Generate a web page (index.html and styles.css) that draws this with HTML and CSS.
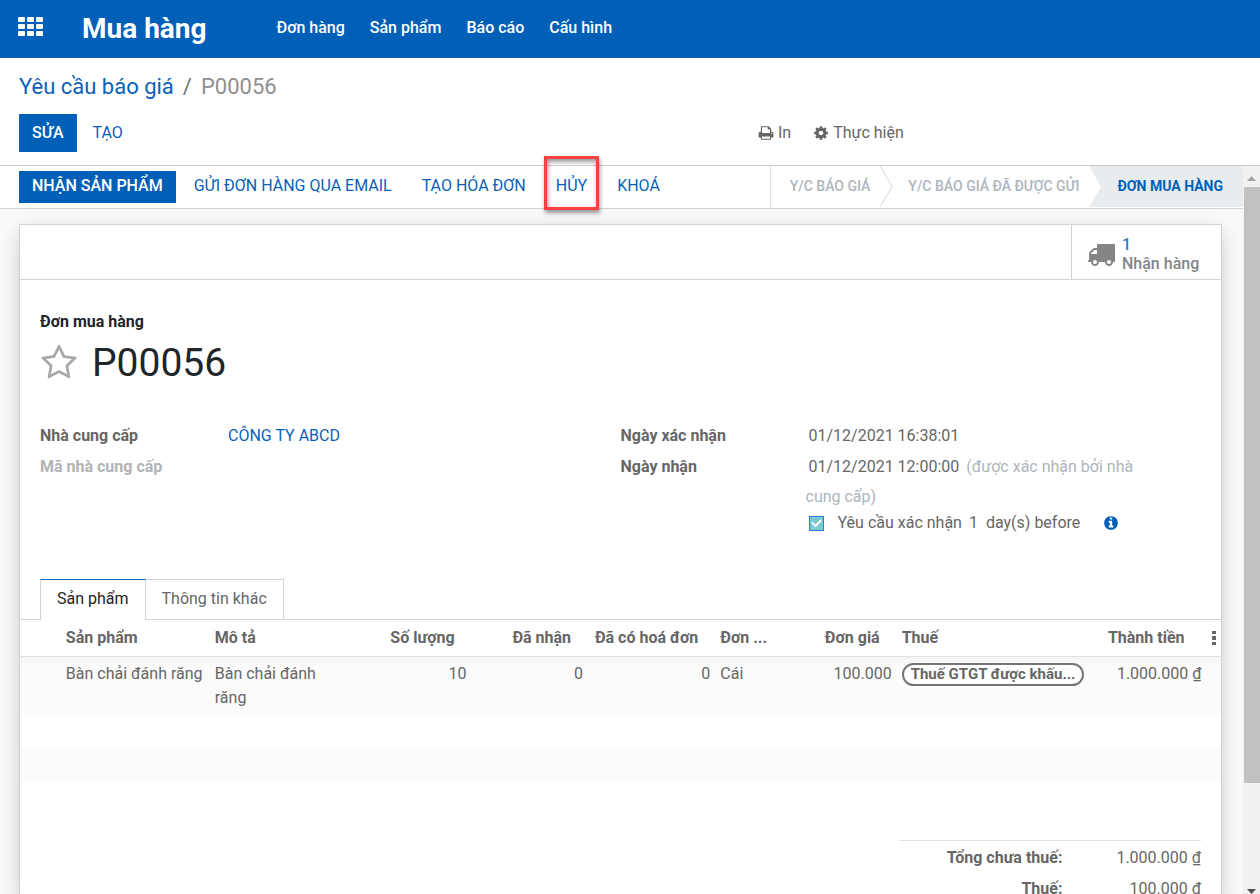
FILE: index.html
```html
<!DOCTYPE html>
<html lang="vi">
<head>
<meta charset="utf-8">
<meta name="viewport" content="width=device-width, initial-scale=1">
<title>P00056 - Mua hàng</title>
<link rel="stylesheet" href="styles.css">
</head>
<body class="app">
<header class="navbar">
  <button class="apps" type="button" aria-label="Menu">
    <svg class="apps-icon" viewBox="0 0 25 19" aria-hidden="true">
      <g fill="currentColor">
        <rect x="0" y="0" width="7" height="5" rx="1"/><rect x="9" y="0" width="7" height="5" rx="1"/><rect x="18" y="0" width="7" height="5" rx="1"/>
        <rect x="0" y="7" width="7" height="5" rx="1"/><rect x="9" y="7" width="7" height="5" rx="1"/><rect x="18" y="7" width="7" height="5" rx="1"/>
        <rect x="0" y="14" width="7" height="5" rx="1"/><rect x="9" y="14" width="7" height="5" rx="1"/><rect x="18" y="14" width="7" height="5" rx="1"/>
      </g>
    </svg>
  </button>
  <a class="brand" href="#">Mua hàng</a>
  <nav class="menu">
    <a href="#">Đơn hàng</a>
    <a href="#">Sản phẩm</a>
    <a href="#">Báo cáo</a>
    <a href="#">Cấu hình</a>
  </nav>
</header>

<section class="control-panel">
  <div class="breadcrumb"><a href="#">Yêu cầu báo giá</a><span class="slash">/</span><span class="current">P00056</span></div>
  <div class="cp-row">
    <div class="cp-buttons">
      <button class="btn btn-primary btn-tall" type="button">SỬA</button>
      <button class="btn btn-link btn-tall" type="button">TẠO</button>
    </div>
    <div class="cp-actions">
      <button class="action" type="button">
        <svg class="fa" viewBox="0 0 1792 1792" aria-hidden="true"><path d="M448 1536h896v-256h-896v256zm0-640h896v-384h-160q-40 0-68-28t-28-68v-160h-640v640zm1152 64q0-26-19-45t-45-19-45 19-19 45 19 45 45 19 45-19 19-45zm128 0v416q0 13-9.500 22.500t-22.500 9.500h-224v160q0 40-28 68t-68 28h-960q-40 0-68-28t-28-68v-160h-224q-13 0-22.500-9.500t-9.500-22.500v-416q0-79 56.500-135.500t135.500-56.500h64v-544q0-40 28-68t68-28h672q40 0 88 20t76 48l152 152q28 28 48 76t20 88v256h64q79 0 135.500 56.500t56.500 135.500z"/></svg>
        In
      </button>
      <button class="action" type="button">
        <svg class="fa" viewBox="0 0 1792 1792" aria-hidden="true"><path d="M1152 896q0-106-75-181t-181-75-181 75-75 181 75 181 181 75 181-75 75-181zm512-109v222q0 12-8 23t-20 13l-185 28q-19 54-39 91 35 50 107 138 10 12 10 25t-9 23q-27 37-99 108t-94 71q-12 0-26-9l-138-108q-44 23-91 38-16 136-29 186-7 28-36 28h-222q-14 0-24.500-8.500t-11.500-21.500l-28-184q-49-16-90-37l-141 107q-10 9-25 9-14 0-25-11-126-114-165-168-7-10-7-23 0-12 8-23 15-21 51-66.500t54-70.500q-27-50-41-99l-183-27q-13-2-21-12.500t-8-23.500v-222q0-12 8-23t19-13l186-28q14-46 39-92-40-57-107-138-10-12-10-24 0-10 9-23 26-36 98.500-107.500t94.500-71.500q13 0 26 10l138 107q44-23 91-38 16-136 29-186 7-28 36-28h222q14 0 24.500 8.500t11.500 21.500l28 184q49 16 90 37l142-107q9-9 24-9 13 0 25 10 129 119 165 170 7 8 7 22 0 12-8 23-15 21-51 66.500t-54 70.500q26 50 41 98l183 28q13 2 21 12.500t8 23.500z"/></svg>
        Thực hiện
      </button>
    </div>
  </div>
</section>

<div class="viewport">
  <main class="form-view">
    <div class="statusbar">
      <div class="status-buttons">
        <button class="btn btn-primary" type="button">NHẬN SẢN PHẨM</button>
        <button class="btn btn-link" type="button">GỬI ĐƠN HÀNG QUA EMAIL</button>
        <button class="btn btn-link" type="button">TẠO HÓA ĐƠN</button>
        <button class="btn btn-link marked" type="button">HỦY</button>
        <button class="btn btn-link" type="button">KHOÁ</button>
      </div>
      <div class="stages">
        <span class="stage">Y/C BÁO GIÁ</span>
        <svg class="chevron" viewBox="0 0 13 41" preserveAspectRatio="none" aria-hidden="true"><path d="M0 0L12 20.500L0 41" fill="none" stroke="#d4d8dd"/></svg>
        <span class="stage">Y/C BÁO GIÁ ĐÃ ĐƯỢC GỬI</span>
        <svg class="chevron" viewBox="0 0 13 41" preserveAspectRatio="none" aria-hidden="true"><path d="M0 0L12 20.500L0 41H13V0Z" fill="#e9ecef"/></svg>
        <span class="stage active">ĐƠN MUA HÀNG</span>
      </div>
    </div>

    <article class="sheet">
      <div class="button-box">
        <button class="stat" type="button">
          <svg class="fa truck" viewBox="0 0 1792 1792" aria-hidden="true"><path d="M640 1408q0-52-38-90t-90-38-90 38-38 90 38 90 90 38 90-38 38-90zm-384-512h384v-256h-158q-13 0-22 9l-195 195q-9 9-9 22v30zm1280 512q0-52-38-90t-90-38-90 38-38 90 38 90 90 38 90-38 38-90zm256-1088v1024q0 15-4 26.500t-13.500 18.500-16.500 11.500-23.500 6-22.500 2-25.500 0-22.500-.5q0 106-75 181t-181 75-181-75-75-181h-384q0 106-75 181t-181 75-181-75-75-181h-64q-3 0-22.500.5t-25.500 0-22.500-2-23.500-6-16.500-11.500-13.500-18.500-4-26.500q0-26 19-45t45-19v-320q0-8-.5-35t0-38 2.500-34.500 6.500-37 14-30.500 22.500-30l198-198q19-19 50.500-32t58.500-13h160v-192q0-26 19-45t45-19h1024q26 0 45 19t19 45z"/></svg>
          <span class="stat-info"><span class="stat-value">1</span><span>Nhận hàng</span></span>
        </button>
      </div>

      <div class="title">
        <span class="title-label">Đơn mua hàng</span>
        <h1 class="title-name">
          <button class="star" type="button" aria-label="Ưu tiên"><svg class="fa star-icon" viewBox="0 0 1792 1792" aria-hidden="true"><path d="M1201 1004l306-297-422-62-189-382-189 382-422 62 306 297-73 421 378-199 377 199zm527-357q0 22-26 48l-363 354 86 500q1 7 1 20 0 50-41 50-19 0-40-12l-449-236-449 236q-22 12-40 12-21 0-31.500-14.500t-10.500-35.500q0-6 2-20l86-500-364-354q-25-27-25-48 0-37 56-46l502-73 225-455q19-41 49-41t49 41l225 455 502 73q56 9 56 46z"/></svg></button>
          <span>P00056</span>
        </h1>
      </div>

      <div class="groups">
        <dl class="group">
          <dt>Nhà cung cấp</dt><dd><a class="value" href="#">CÔNG TY ABCD</a></dd>
          <dt class="empty">Mã nhà cung cấp</dt><dd></dd>
        </dl>
        <dl class="group">
          <dt>Ngày xác nhận</dt><dd><span class="value">01/12/2021 16:38:01</span></dd>
          <dt>Ngày nhận</dt>
          <dd class="receipt">
            <span class="value">01/12/2021 12:00:00</span> <span class="muted">(được xác nhận bởi nhà cung cấp)</span>
            <div class="reminder">
              <input class="check" type="checkbox" id="remind" checked>
              <label for="remind">Yêu cầu xác nhận</label>
              <span class="days">1</span>
              <span>day(s) before</span>
              <svg class="fa info" viewBox="0 0 1792 1792" aria-hidden="true"><path d="M1152 1376v-160q0-14-9-23t-23-9h-96v-512q0-14-9-23t-23-9h-320q-14 0-23 9t-9 23v160q0 14 9 23t23 9h96v320h-96q-14 0-23 9t-9 23v160q0 14 9 23t23 9h448q14 0 23-9t9-23zm-128-896v-160q0-14-9-23t-23-9h-192q-14 0-23 9t-9 23v160q0 14 9 23t23 9h192q14 0 23-9t9-23zm640 416q0 209-103 385.500t-279.500 279.500-385.500 103-385.500-103-279.500-279.500-103-385.500 103-385.500 279.500-279.500 385.500-103 385.500 103 279.500 279.500 103 385.500z"/></svg>
            </div>
          </dd>
        </dl>
      </div>

      <div class="tabs" role="tablist">
        <button class="tab selected" type="button" role="tab" aria-selected="true">Sản phẩm</button>
        <button class="tab" type="button" role="tab" aria-selected="false">Thông tin khác</button>
      </div>

      <table class="lines">
        <colgroup>
          <col class="c-handle"><col class="c-product"><col class="c-desc"><col class="c-qty"><col class="c-received"><col class="c-billed"><col class="c-uom"><col class="c-price"><col class="c-tax"><col class="c-total"><col class="c-more">
        </colgroup>
        <thead>
          <tr>
            <th></th><th>Sản phẩm</th><th>Mô tả</th><th class="num">Số lượng</th><th class="num">Đã nhận</th><th class="num">Đã có hoá đơn</th><th>Đơn ...</th><th class="num">Đơn giá</th><th>Thuế</th><th class="num subtotal">Thành tiền</th>
            <th class="more"><svg class="dots" viewBox="0 0 4 14" aria-hidden="true"><path d="M0 0h4v3H0zM0 5h4v4H0zM0 11h4v3H0z" fill="currentColor"/></svg></th>
          </tr>
        </thead>
        <tbody>
          <tr>
            <td></td><td>Bàn chải đánh răng</td><td>Bàn chải đánh răng</td><td class="num">10</td><td class="num">0</td><td class="num">0</td><td>Cái</td><td class="num">100.000</td><td><span class="tag">Thuế GTGT được khấu...</span></td><td class="num">1.000.000 ₫</td><td></td>
          </tr>
          <tr class="blank"><td colspan="11"></td></tr>
          <tr class="blank"><td colspan="11"></td></tr>
          <tr class="blank"><td colspan="11"></td></tr>
        </tbody>
      </table>

      <dl class="totals">
        <dt>Tổng chưa thuế:</dt><dd>1.000.000 ₫</dd>
        <dt>Thuế:</dt><dd>100.000 ₫</dd>
      </dl>
    </article>
  </main>
  <div class="scrollbar" aria-hidden="true">
    <svg class="arrow" viewBox="0 0 9 5"><path d="M0 5L4.500 0L9 5Z" fill="#a3a3a3"/></svg>
    <div class="thumb"></div>
    <svg class="arrow" viewBox="0 0 9 5"><path d="M0 0L4.500 5L9 0Z" fill="#505050"/></svg>
  </div>
</div>
</body>
</html>
```
FILE: styles.css
```css
* {
  box-sizing: border-box;
}

.app {
  margin: 0;
  height: 100vh;
  overflow: hidden;
  display: flex;
  flex-direction: column;
  background: #fff;
  color: #666;
  font: 16px/24px Roboto, "Noto Sans", sans-serif;
}

a {
  color: #0a5fb8;
  text-decoration: none;
}

button {
  font: inherit;
  color: inherit;
  background: none;
  border: 0;
  padding: 0;
}

dl,
dd,
h1 {
  margin: 0;
}

.fa {
  width: 16px;
  height: 16px;
  fill: currentColor;
  flex: none;
}

/* Top bar */
.navbar {
  flex: none;
  height: 58px;
  display: flex;
  align-items: center;
  padding: 0 18px 3px;
  background: #0060b7;
  color: #fff;
}

.navbar a {
  color: #fff;
}

.apps {
  display: flex;
  margin-right: 39px;
  padding-bottom: 2px;
}

.apps-icon {
  width: 25px;
  height: 19px;
}

.brand {
  font-size: 28px;
  font-weight: 700;
  margin-right: 70px;
  padding-top: 2px;
}

.menu {
  display: flex;
  gap: 25px;
  font-weight: 500;
}

/* Control panel */
.control-panel {
  flex: none;
  padding: 15px 19px 13px;
  border-bottom: 1px solid #c9ccd2;
}

.breadcrumb {
  display: flex;
  gap: 9px;
  font-size: 22px;
  line-height: 28px;
  margin-bottom: 13px;
}

.slash {
  color: #6c757d;
}

.current {
  color: #8f8f8f;
}

.cp-row {
  display: grid;
  grid-template-columns: 739px 1fr;
  align-items: center;
}

.cp-buttons {
  display: flex;
  gap: 4px;
}

.cp-actions {
  display: flex;
  gap: 22px;
}

.action {
  display: flex;
  align-items: center;
  gap: 4px;
}

.btn {
  padding: 0 12px 2px;
  height: 32px;
  line-height: 30px;
  white-space: nowrap;
}

.btn-primary {
  padding-left: 13px;
  padding-right: 13px;
  background: #0060b7;
  color: #fff;
  font-weight: 500;
}

.btn-link {
  color: #0a5fb8;
}

.btn-tall {
  height: 38px;
  padding-bottom: 0;
}

/* Scrolling area */
.viewport {
  flex: 1;
  min-height: 0;
  display: flex;
}

.form-view {
  flex: 1;
  min-width: 0;
  background: #f9f9f9;
}

.scrollbar {
  flex: none;
  width: 17px;
  display: flex;
  flex-direction: column;
  align-items: center;
  justify-content: space-between;
  padding-top: 10px;
  background: #f1f1f1;
}

.arrow {
  width: 9px;
  height: 5px;
}

.thumb {
  width: 16px;
  height: 83%;
  margin: 6px 0 auto;
  align-self: flex-end;
  background: #c1c1c1;
}

.statusbar {
  display: flex;
  justify-content: space-between;
  height: 43px;
  padding-left: 19px;
  background: #fff;
  border-bottom: 1px solid #ced4da;
}

.status-buttons {
  display: flex;
  gap: 6px;
  padding-top: 5px;
}

.marked {
  position: relative;
}

.marked::after {
  content: "";
  position: absolute;
  inset: -15px 0 -7px;
  border: 3px solid #f94144;
  box-shadow: 1px 3px 4px rgba(0, 0, 0, .4), inset 1px 3px 4px rgba(0, 0, 0, .4);
}

.stages {
  display: flex;
  font-size: 14px;
  font-weight: 500;
  line-height: 40px;
  color: #adb5bd;
  border-left: 1px solid #dee2e6;
  padding-bottom: 1px;
}

.stage {
  padding: 0 10px 0 15px;
  white-space: nowrap;
}

.stage:first-child {
  padding-left: 19px;
}

.stage.active {
  padding-right: 20px;
  background: #e9ecef;
  color: #0060b7;
  font-weight: 700;
}

.chevron {
  width: 13px;
  height: 100%;
  flex: none;
}

/* Sheet */
.sheet {
  margin: 15px 21px 0 19px;
  background: #fff;
  border: 1px solid #ced4da;
  box-shadow: 0 5px 20px -5px rgba(0, 0, 0, .3);
}

.button-box {
  display: flex;
  justify-content: flex-end;
  height: 55px;
  border-bottom: 1px solid #ced4da;
}

.stat {
  display: flex;
  align-items: center;
  gap: 7px;
  width: 150px;
  padding: 3px 15px 0;
  border-left: 1px solid #ced4da;
  color: #858585;
  text-align: left;
  line-height: 19px;
}

.truck {
  width: 28px;
  height: 28px;
}

.stat-info {
  display: grid;
}

.stat-info,
.stat-value {
  font-weight: 500;
  white-space: nowrap;
}

.stat-value {
  color: #2a78c8;
}

.title {
  padding: 30px 20px 0;
  color: #212529;
}

.title-label {
  font-weight: 700;
}

.title-name {
  display: flex;
  align-items: center;
  gap: 14px;
  margin-top: 5px;
  font-size: 39px;
  font-weight: 400;
  line-height: 48px;
}

.star {
  display: flex;
  color: #a8a8a8;
}

.star-icon {
  width: 38px;
  height: 40px;
}

.groups {
  display: grid;
  grid-template-columns: 1fr 1fr;
  padding: 34px 20px 0;
}

.group {
  display: grid;
  grid-template-columns: 185px 1fr;
  align-content: start;
  line-height: 30px;
}

.group dt {
  font-weight: 700;
  height: 31px;
}

.group dt.empty {
  color: #b3b3b3;
}

.value {
  padding: 0 3px;
}

.receipt {
  max-width: 360px;
}

.muted {
  color: #adb5bd;
}

.reminder {
  display: flex;
  align-items: center;
  line-height: 22px;
  padding-left: 3px;
}

.check {
  appearance: none;
  width: 15px;
  height: 15px;
  margin: 0 14px 0 0;
  border: 1px solid #2a7de1;
  background: #7ccbcb;
  display: grid;
  place-items: center;
}

.check::before {
  content: "";
  width: 7px;
  height: 4px;
  margin-bottom: 2px;
  border: solid #fff;
  border-width: 0 0 2px 2px;
  transform: rotate(-45deg);
}

.days {
  margin: 0 8px 0 7px;
}

.info {
  margin-left: 23px;
  color: #0060b7;
}

/* Tabs */
.tabs {
  display: flex;
  padding-left: 20px;
  margin-top: 45px;
  border-bottom: 1px solid #ced4da;
}

.tab {
  height: 40px;
  padding: 0 16px 2px;
  border: 1px solid #ced4da;
  border-width: 1px 1px 0 0;
}

.tab.selected {
  height: 41px;
  margin-bottom: -1px;
  border-left-width: 1px;
  border-top-color: #0060b7;
  background: #fff;
  color: #212529;
}

/* Order lines */
.lines {
  width: 100%;
  table-layout: fixed;
  border-collapse: collapse;
}

.c-handle { width: 3.4%; }
.c-product { width: 12.4%; }
.c-desc { width: 11.2%; }
.c-qty { width: 10.6%; }
.c-received { width: 9.7%; }
.c-billed { width: 10.6%; }
.c-uom { width: 6.3%; }
.c-price { width: 8.8%; }
.c-tax { width: 16.1%; }
.c-total { width: 9.7%; }
.c-more { width: 1.2%; }

.lines th {
  height: 36px;
  padding: 0 5px;
  font-weight: 700;
  text-align: left;
  white-space: nowrap;
  border-bottom: 1px solid #dee2e6;
}

.lines td {
  padding: 5px 5px 4px;
  vertical-align: top;
}

.lines .num {
  text-align: right;
}

.lines th.num {
  padding-right: 17px;
}

.lines th.subtotal {
  padding-right: 22px;
}

.lines td:nth-child(2) {
  white-space: nowrap;
}

.lines th.more {
  padding: 0;
}

.dots {
  display: block;
  width: 4px;
  height: 14px;
  margin-left: 5px;
}

.lines tbody tr {
  height: 34px;
}

.lines tbody tr:nth-child(odd) {
  background: #fbfbfb;
}

.lines tbody tr:first-child {
  background: linear-gradient(#f3f3f4, #fbfbfb 10px);
}

.tag {
  display: block;
  width: fit-content;
  margin-top: 1px;
  padding: 0 7px;
  border: 2px solid #757575;
  border-radius: 12px;
  background: #fff;
  font-size: 15px;
  font-weight: 700;
  line-height: 19px;
  white-space: nowrap;
}

/* Totals */
.totals {
  display: grid;
  grid-template-columns: 1fr auto;
  column-gap: 54px;
  row-gap: 7px;
  width: 302px;
  margin: 24px 20px 0 auto;
  padding-top: 5px;
  border-top: 1px solid #dee2e6;
  text-align: right;
}

.totals dt {
  font-weight: 700;
}
```
